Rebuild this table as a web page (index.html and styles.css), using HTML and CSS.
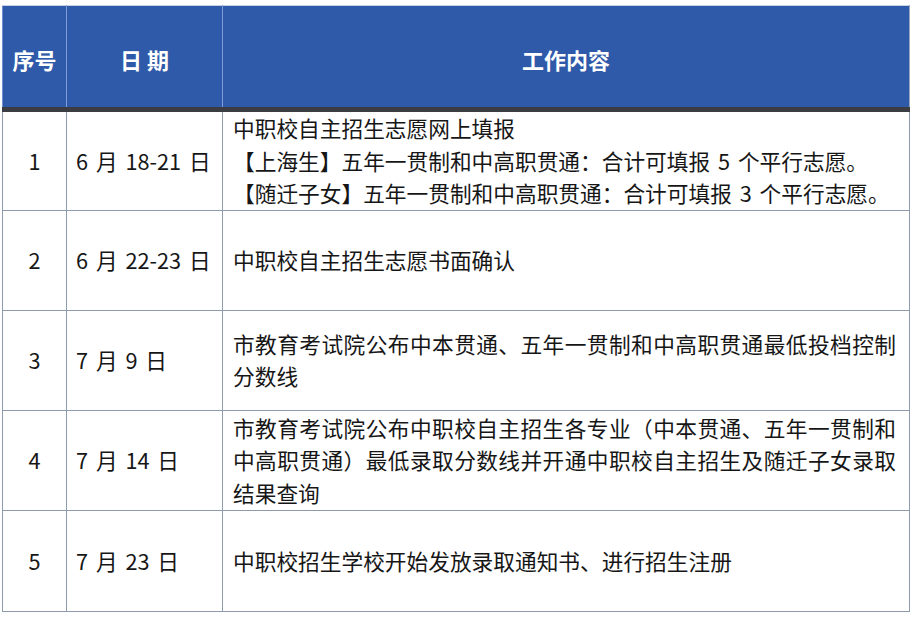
FILE: index.html
```html
<!DOCTYPE html>
<html lang="zh-CN">
<head>
<meta charset="utf-8">
<title>中职校自主招生日程</title>
<link rel="stylesheet" href="styles.css">
</head>
<body>
<div class="wrap">
<table class="sched">
  <colgroup>
    <col class="c-no">
    <col class="c-date">
    <col class="c-work">
  </colgroup>
  <thead>
    <tr>
      <th>序号</th>
      <th>日&nbsp;期</th>
      <th>工作内容</th>
    </tr>
  </thead>
  <tbody>
    <tr>
      <td class="no">1</td>
      <td class="date">6 月 18-21 日</td>
      <td class="work">中职校自主招生志愿网上填报<br>【上海生】五年一贯制和中高职贯通：合计可填报 5 个平行志愿。<br>【随迁子女】五年一贯制和中高职贯通：合计可填报 3 个平行志愿。</td>
    </tr>
    <tr>
      <td class="no">2</td>
      <td class="date">6 月 22-23 日</td>
      <td class="work">中职校自主招生志愿书面确认</td>
    </tr>
    <tr>
      <td class="no">3</td>
      <td class="date">7 月 9 日</td>
      <td class="work">市教育考试院公布中本贯通、五年一贯制和中高职贯通最低投档控制分数线</td>
    </tr>
    <tr>
      <td class="no">4</td>
      <td class="date">7 月 14 日</td>
      <td class="work">市教育考试院公布中职校自主招生各专业（中本贯通、五年一贯制和中高职贯通）最低录取分数线并开通中职校自主招生及随迁子女录取结果查询</td>
    </tr>
    <tr>
      <td class="no">5</td>
      <td class="date">7 月 23 日</td>
      <td class="work">中职校招生学校开始发放录取通知书、进行招生注册</td>
    </tr>
  </tbody>
</table>
</div>
</body>
</html>
```

FILE: styles.css
```css
html, body {
  margin: 0;
  padding: 0;
  background: #ffffff;
}

body {
  font-family: "Noto Sans CJK SC", "Noto Sans", sans-serif;
  color: #161616;
}

.wrap {
  padding: 5px 0 0 2px;
}

.sched {
  border-collapse: collapse;
  table-layout: fixed;
  width: 907px;
}

.c-no { width: 64px; }
.c-date { width: 156px; }
.c-work { width: 687px; }

.sched th {
  background: #2f59a9;
  color: #ffffff;
  font-size: 22px;
  font-weight: 700;
  height: 104px;
  padding: 4px 0 0 0;
  box-sizing: border-box;
  text-align: center;
  vertical-align: middle;
  border-left: 1px solid #7f9cd6;
  border-right: 1px solid #7f9cd6;
  border-top: 1px solid #c9d3e6;
  border-bottom: 5px solid #3b3d42;
  line-height: 30px;
}

.sched th:first-child { border-left-color: #6f8cc8; }
.sched th:last-child { border-right-color: #9aa6bb; }

.sched td {
  height: 100.3px;
  box-sizing: border-box;
  border: 1px solid #8e9aae;
  font-size: 21.7px;
  line-height: 32.5px;
  word-spacing: 3px;
  vertical-align: middle;
  padding: 0 13px 0 10px;
}

.sched td.no {
  text-align: center;
  padding: 0;
}

.sched td.date {
  padding-left: 9px;
  padding-right: 0;
  white-space: nowrap;
}

.sched td.work {
  text-align: justify;
  line-break: strict;
}
```
